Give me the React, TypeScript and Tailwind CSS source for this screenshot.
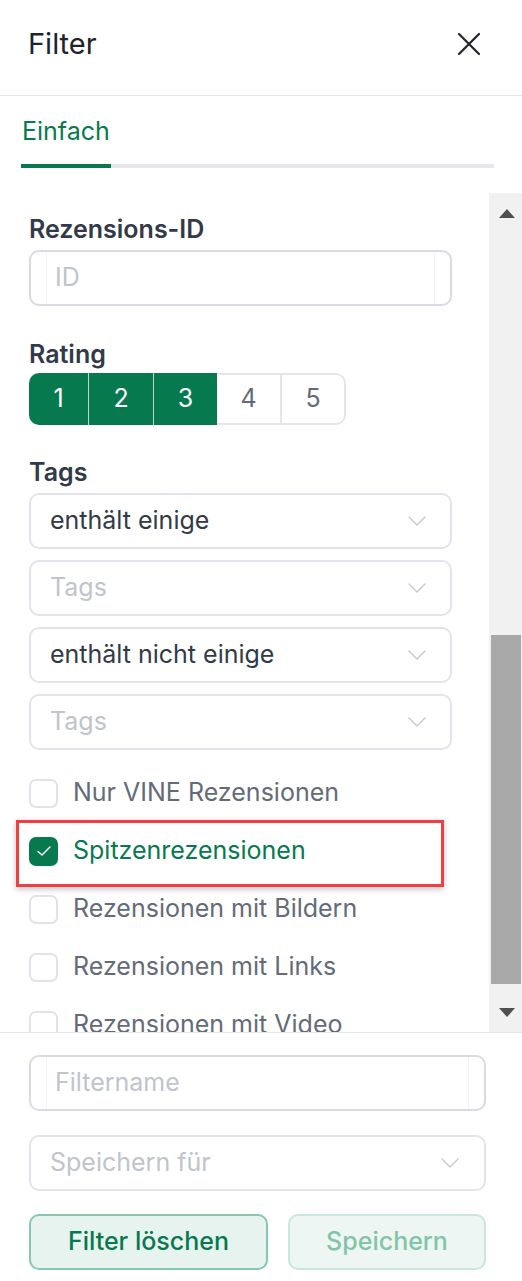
import React from 'react';

const GREEN = '#07794f';

const Chevron: React.FC = () => (
  <svg width="18" height="10" viewBox="0 0 18 10" fill="none" className="shrink-0">
    <polyline points="1,1 9,9 17,1" stroke="#c4c8d0" strokeWidth="1.4" strokeLinejoin="round" strokeLinecap="round" />
  </svg>
);

const TextInput: React.FC<{ placeholder: string }> = ({ placeholder }) => (
  <div className="flex h-[56px] w-full shrink-0 items-stretch rounded-[10px] border-2 border-[#d8dbe2] bg-white">
    <div className="w-[16px] border-r border-[#f3f4f6]" />
    <div className="flex flex-1 items-center pl-[8px] text-[25px] text-[#c0c4cc]">{placeholder}</div>
    <div className="w-[16px] border-l border-[#f3f4f6]" />
  </div>
);

const Select: React.FC<{ value: string; placeholder?: boolean }> = ({ value, placeholder }) => (
  <div className="flex h-[56px] w-full shrink-0 items-center justify-between rounded-[10px] border-2 border-[#e2e4e9] bg-white pl-[19px] pr-[24px]">
    <span className={placeholder ? 'text-[25px] text-[#c0c4cc]' : 'text-[25px] text-[#323a48]'}>{value}</span>
    <Chevron />
  </div>
);

const Checkbox: React.FC<{ label: string; checked?: boolean }> = ({ label, checked }) => (
  <div className="flex h-[58px] shrink-0 items-center gap-[15px]">
    {checked ? (
      <div className="flex h-[29px] w-[29px] items-center justify-center rounded-[7px] bg-[#07794f]">
        <svg width="16" height="12" viewBox="0 0 16 12" fill="none">
          <polyline points="2,6.5 6,10 14,2" stroke="white" strokeWidth="1.5" strokeLinecap="round" strokeLinejoin="round" />
        </svg>
      </div>
    ) : (
      <div className="h-[29px] w-[29px] rounded-[7px] border-2 border-[#e1e3e8] bg-white" />
    )}
    <span className={checked ? 'text-[25px] text-[#07794f]' : 'text-[25px] text-[#646b78]'}>{label}</span>
  </div>
);

const ratings = [
  { n: 1, w: 'w-[59px]', on: true },
  { n: 2, w: 'w-[65px]', on: true },
  { n: 3, w: 'w-[64px]', on: true },
  { n: 4, w: 'w-[65px]', on: false },
  { n: 5, w: 'w-[64px]', on: false },
];

export default function App() {
  return (
    <div className="flex h-[1281px] w-[522px] flex-col bg-white font-['Inter',sans-serif]" style={{ color: GREEN }}>
      {/* header */}
      <div className="flex h-[96px] shrink-0 items-center justify-between border-b border-[#e5e7eb] pb-[8px] pl-[28px] pr-[41px]">
        <span className="text-[29px] leading-none text-[#1f232b]">Filter</span>
        <svg width="24" height="24" viewBox="0 0 24 24" fill="none">
          <path d="M2 2 L22 22 M22 2 L2 22" stroke="#1f232b" strokeWidth="2.2" strokeLinecap="round" />
        </svg>
      </div>

      {/* tabs */}
      <div className="shrink-0 pl-[21px] pr-[28px] pt-[19px]">
        <div className="pb-[17px] pl-[1px] text-[25px] leading-[32px] text-[#07794f]">Einfach</div>
        <div className="flex h-[4px] bg-[#e5e7eb]">
          <div className="w-[90px] bg-[#07794f]" />
        </div>
      </div>

      {/* scroll area */}
      <div className="mt-[25px] flex h-[840px] shrink-0 border-b border-[#e5e7eb]">
        <div className="flex flex-1 flex-col overflow-hidden pl-[29px] pr-[37px] pt-[20px]">
          <div className="mb-[5px] shrink-0 text-[25px] font-semibold leading-[32px] text-[#323a48]">Rezensions-ID</div>
          <TextInput placeholder="ID" />

          <div className="mb-[3px] mt-[32px] shrink-0 text-[25px] font-semibold leading-[32px] text-[#323a48]">Rating</div>
          <div className="flex shrink-0">
            {ratings.map((r, i) => (
              <div
                key={r.n}
                className={[
                  'flex h-[52px] items-center justify-center text-[25px]',
                  r.w,
                  r.on ? 'bg-[#07794f] text-white' : 'border-y-2 border-r-2 border-[#e4e6ea] bg-white text-[#646b78]',
                  i === 0 ? 'rounded-l-[10px]' : '',
                  i === 4 ? 'rounded-r-[10px]' : '',
                  i > 0 && r.on ? 'border-l border-[#b9d9cb]' : '',
                ].join(' ')}
              >
                {r.n}
              </div>
            ))}
          </div>

          <div className="mb-[5px] mt-[31px] shrink-0 text-[25px] font-semibold leading-[32px] text-[#323a48]">Tags</div>
          <div className="flex shrink-0 flex-col gap-[11px]">
            <Select value="enthält einige" />
            <Select value="Tags" placeholder />
            <Select value="enthält nicht einige" />
            <Select value="Tags" placeholder />
          </div>

          <div className="mt-[14px] flex shrink-0 flex-col">
            <Checkbox label="Nur VINE Rezensionen" />
            <div className="relative shrink-0">
              <Checkbox label="Spitzenrezensionen" checked />
              <div className="pointer-events-none absolute -left-[13px] -top-[2px] -bottom-[7px] right-[8px] border-[3px] border-[#ee4040] shadow-[0_2px_6px_rgba(0,0,0,0.25)]" />
            </div>
            <Checkbox label="Rezensionen mit Bildern" />
            <Checkbox label="Rezensionen mit Links" />
            <Checkbox label="Rezensionen mit Video" />
          </div>
        </div>

        {/* scrollbar */}
        <div className="flex w-[33px] shrink-0 flex-col bg-[#f1f1f1]">
          <div className="flex h-[40px] items-center justify-center pl-[2px]">
            <svg width="16" height="9" viewBox="0 0 16 9">
              <polygon points="8,0 16,9 0,9" fill="#505050" />
            </svg>
          </div>
          <div className="flex flex-1 flex-col justify-end pb-[8px] pl-[2px] pr-[1px]">
            <div className="h-[349px] bg-[#a8a8a8]" />
          </div>
          <div className="flex h-[40px] items-center justify-center pl-[2px]">
            <svg width="16" height="9" viewBox="0 0 16 9">
              <polygon points="0,0 16,0 8,9" fill="#505050" />
            </svg>
          </div>
        </div>
      </div>

      {/* footer */}
      <div className="flex flex-1 flex-col pl-[29px] pr-[36px] pt-[22px]">
        <TextInput placeholder="Filtername" />
        <div className="mt-[24px] flex h-[56px] w-full items-center justify-between rounded-[10px] border-2 border-[#e2e4e9] bg-white pl-[19px] pr-[25px]">
          <span className="text-[25px] text-[#c0c4cc]">Speichern für</span>
          <Chevron />
        </div>
        <div className="mt-[23px] flex gap-[20px]">
          <button className="flex h-[56px] w-[239px] items-center justify-center rounded-[10px] border-2 border-[#86c8ac] bg-[#e7f3ee] text-[25px] font-medium text-[#07794f]">
            Filter löschen
          </button>
          <button className="flex h-[56px] flex-1 items-center justify-center rounded-[10px] border-2 border-[#cbe7da] bg-[#edf6f2] text-[25px] font-medium text-[#82c4a7]">
            Speichern
          </button>
        </div>
      </div>
    </div>
  );
}
